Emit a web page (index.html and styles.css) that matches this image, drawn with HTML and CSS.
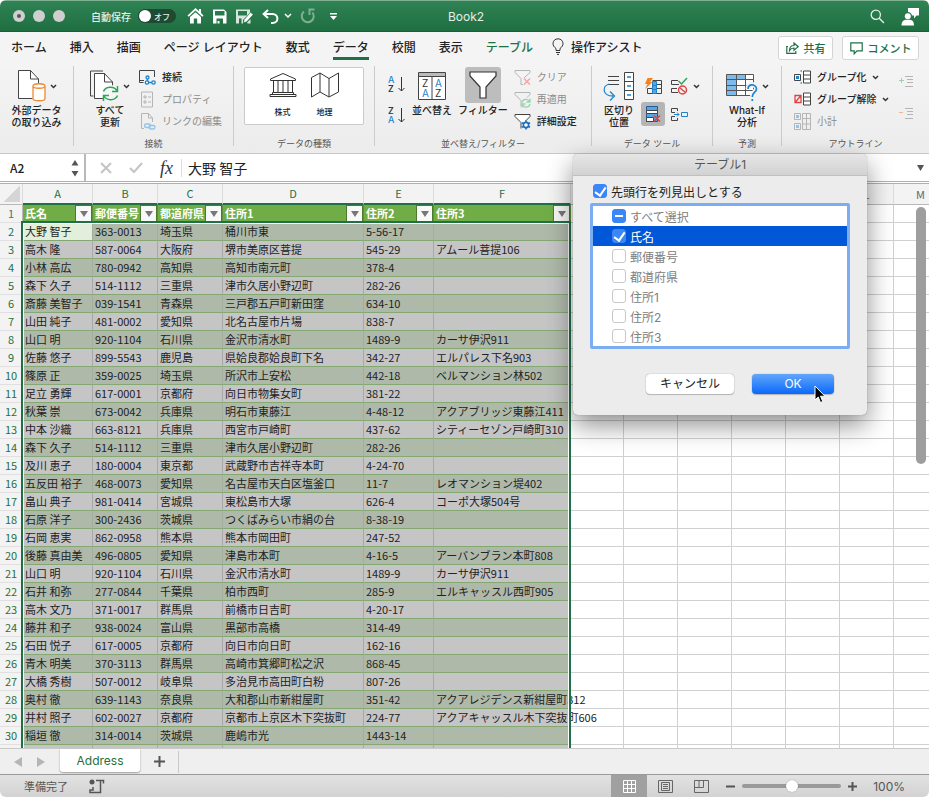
FILE: index.html
```html
<!DOCTYPE html>
<html lang="ja">
<head>
    <meta charset="UTF-8">
    <meta name="viewport" content="width=device-width, initial-scale=1.0">
    <title>Book2</title>

    <link rel="stylesheet" href="styles.css">

</head>
<body>

<div class="window">

    <!-- title bar -->
    <header class="titlebar">
        <div class="title-left">
            <div class="lights">
                <span class="light edited"></span>
                <span class="light"></span>
                <span class="light"></span>
            </div>
            <label class="autosave">自動保存
                <span class="toggle"><input type="checkbox" class="toggle-knob"><span class="toggle-text">オフ</span></span>
            </label>
            <div class="quick">
                <button aria-label="ホーム"><svg width="17" height="16" viewBox="0 0 17 16" fill="#fff"><path d="M8.500 0 0.500 7.500 1.700 8.800 8.500 2.600 15.300 8.800 16.500 7.500 14 5.100V1h-2v2.300z"/><path d="M3 9 8.500 4.200 14 9v6.500H10.200V10.500H6.800v5H3z"/></svg></button>
                <button aria-label="保存"><svg width="15" height="15" viewBox="0 0 15 15"><path fill="#fff" fill-rule="evenodd" d="M1 .5h11L14.500 3v11.500H1zM3 2v4.500h9.500V2zM4.500 9.500v5h6.500v-5z"/><path fill="#fff" d="M5.500 12h2v2.500h-2z"/></svg></button>
                <button aria-label="名前を付けて保存"><svg width="19" height="15" viewBox="0 0 19 15"><path fill="#d5e5da" fill-rule="evenodd" d="M1 .5h14V4L8 11v3.500H1zM3 2v4.500h9V2zM4 9.500v5h2.500v-5z"/><path fill="#fff" stroke="#24723f" stroke-width=".6" d="M8.500 13.800 9.200 10.600 15.600 3.300 18.200 5.500 11.700 12.800z"/><path fill="#d5e5da" d="M12.500 13.300 15.500 10v4.500h-3z"/></svg></button>
                <button aria-label="元に戻す"><svg width="17" height="15" viewBox="0 0 17 15" fill="none" stroke="#fff" stroke-width="2"><path d="M6 1 1.600 5 6 9M2 5h8.500c6.500 0 6.500 9 0 9H9"/></svg></button>
                <button class="history" aria-label="元に戻す一覧"><svg width="8" height="6" viewBox="0 0 8 6" fill="none" stroke="#fff" stroke-width="1.500"><path d="M1 1l3 3 3-3"/></svg></button>
                <button class="redo" aria-label="やり直し"><svg width="16" height="16" viewBox="0 0 16 16" fill="none" stroke="#7fb091" stroke-width="2"><path d="M4 3.500A6 6 0 1 0 12.500 4.500M14.500 1.500H9.500V7"/></svg></button>
                <button aria-label="カスタマイズ"><svg width="9" height="9" viewBox="0 0 9 9" fill="#fff"><path d="M1 1h7v1.500H1zM1 4h7L4.500 8z"/></svg></button>
            </div>
        </div>
        <h1 class="title">Book2</h1>
        <div class="title-right">
            <button aria-label="検索"><svg width="15" height="15" viewBox="0 0 15 15" fill="none" stroke="#e6f0e9" stroke-width="1.300"><circle cx="5.800" cy="5.800" r="4.600"/><path d="M9.200 9.200 14 14"/></svg></button>
            <button aria-label="アカウント"><svg width="18" height="19" viewBox="0 0 18 19" fill="#fff"><path d="M7 1h11v7.500h-2.500L13 11.500V8.500H11A4.500 4.500 0 0 0 7 5z"/><circle cx="6.800" cy="9.300" r="3"/><path d="M.5 18.500c0-3.800 2-5.500 4-5.700h4.500c2.500.2 4 2 4 5.700z"/></svg></button>
        </div>
    </header>

    <!-- ribbon tabs -->
    <nav class="tabs">
        <a href="#" class="tab">ホーム</a>
        <a href="#" class="tab">挿入</a>
        <a href="#" class="tab">描画</a>
        <a href="#" class="tab">ページ レイアウト</a>
        <a href="#" class="tab">数式</a>
        <a href="#" class="tab active">データ</a>
        <a href="#" class="tab">校閲</a>
        <a href="#" class="tab">表示</a>
        <a href="#" class="tab context">テーブル</a>
        <a href="#" class="tab assist"><svg width="12" height="17" viewBox="0 0 12 17" fill="none" stroke="#333"><path d="M4 12.500v-2C2 9 1 7.500 1 5.500 1 2.800 3.200.8 6 .8s5 2 5 4.700c0 2-1 3.500-3 5v2zM4 14.500h4M5 16.400h2"/></svg>操作アシスト</a>
        <div class="share">
            <button class="share-button"><svg width="13" height="12" viewBox="0 0 13 12" fill="none" stroke="#1e7145" stroke-width="1.200"><path d="M2 4.500H.8v6.800h9V9"/><path d="M3.500 8.500C3.500 5 5.500 3.500 8 3.500V1L12.200 4.700 8 8.200V6C6 6 4.500 6.800 3.500 8.500z"/></svg>共有</button>
            <button class="share-button comment"><svg width="13" height="13" viewBox="0 0 13 13" fill="none" stroke="#1e7145" stroke-width="1.200"><path d="M.8.8h11.400v8H7L4.200 11.800v-3H.8z"/></svg>コメント</button>
        </div>
    </nav>

    <!-- ribbon -->
    <div class="ribbon">

        <section class="group external">
            <div class="group-body">
                <button class="big">
                    <span class="big-icon">
                        <svg width="29" height="32" viewBox="0 0 29 32" fill="none" stroke="#444"><path fill="#fff" d="M15.500 28.500H1.500V.5H13.500L21.500 9v6"/><path d="M13.500.5V9h8"/><path fill="#fff" stroke="#f08a30" stroke-width="1.300" d="M16 16v12.500c0 3 12 3 12 0V16c0-3-12-3-12 0zc0 3 12 3 12 0"/></svg>
                        <svg class="chevron" viewBox="0 0 7 5"><path d="M1 1l2.500 2.500L6 1"/></svg>
                    </span>
                    外部データ<br>の取り込み
                </button>
            </div>
        </section>

        <section class="group connect">
            <div class="group-body">
                <button class="big">
                    <span class="big-icon">
                        <svg width="29" height="32" viewBox="0 0 29 32" fill="none" stroke="#444"><path d="M3.500 26H.5V1H13"/><path fill="#fff" d="M13 28.500H4.500V3.500H14.500L22.500 12v4"/><path d="M14.500 3.500V12h8"/><circle cx="20.500" cy="23.500" r="8.500" fill="#f6f6f6" stroke="none"/><g stroke="#2ba65a" stroke-width="1.500"><path d="M13.500 21.500C15.500 16.500 24 15.500 27 21M27.500 16v5.500H22M27.500 25.500C25.500 30.500 17 31.500 14 26M13.500 31v-5.500H19"/></g></svg>
                        <svg class="chevron" viewBox="0 0 7 5"><path d="M1 1l2.500 2.500L6 1"/></svg>
                    </span>
                    すべて<br>更新
                </button>
                <div class="stack">
                    <button class="small"><svg width="17" height="16" viewBox="0 0 17 16" fill="none" stroke="#444"><path d="M4.500 13.500H.5V1.500H15.500V8M.5 11.500H5"/><g stroke="#1f83cc" stroke-width="1.300"><circle cx="8.500" cy="8.500" r="1.500"/><circle cx="8" cy="13.500" r="1.700"/><circle cx="14.500" cy="13.500" r="1.700"/><path d="M8.500 10v2M9.700 13.500h3"/></g></svg>接続</button>
                    <button class="small" disabled><svg width="17" height="17" viewBox="0 0 17 17" fill="none" stroke="#b5b5b5"><path d="M2.500 1h11v15h-11z"/><path d="M5 5h2v2H5zM5 10h2v2H5zM9 6h3M9 11h3"/></svg>プロパティ</button>
                    <button class="small" disabled><svg width="17" height="17" viewBox="0 0 17 17" fill="none" stroke="#b5b5b5"><path d="M5 15.500H2.500V.5h7l4 4.500v4M9.500.5V5h4"/><g stroke="#93c3e8" stroke-width="1.300"><rect x="5.500" y="11" width="6" height="3.500" rx="1.700"/><rect x="10" y="12.500" width="6" height="3.500" rx="1.700"/></g></svg>リンクの編集</button>
                </div>
            </div>
            <h2 class="group-label">接続</h2>
        </section>

        <section class="group types">
            <div class="group-body">
                <div class="gallery">
                    <button class="type"><svg width="28" height="26" viewBox="0 0 28 26" fill="none" stroke="#333"><path d="M1.500 8.500v-1.500L14 1.500 26.500 7v1.500zM4.500 8.500v12M9 8.500v12M14 8.500v12M19 8.500v12M23.500 8.500v12M3.500 20.500h21v2h-21zM1 22.500h26v2H1z"/></svg>株式</button>
                    <button class="type"><svg width="30" height="26" viewBox="0 0 30 26" fill="none" stroke="#333"><path d="M1.500 5.500 10 1l9 5.500L28.500 1v19L19 25l-9-5-8.500 5zM10 1v19M19 6.500V25"/></svg>地理</button>
                </div>
            </div>
            <h2 class="group-label">データの種類</h2>
        </section>

        <section class="group sort">
            <div class="group-body">
                <div class="sorts">
                    <button aria-label="昇順"><svg width="18" height="18" viewBox="0 0 18 18"><text x="0" y="8" class="glyph blue">A</text><text x="0" y="17" class="glyph">Z</text><path d="M13.500 2v14M10.500 13l3 3 3-3" fill="none" stroke="#333"/></svg></button>
                    <button aria-label="降順"><svg width="18" height="18" viewBox="0 0 18 18"><text x="0" y="8" class="glyph">Z</text><text x="0" y="17" class="glyph blue">A</text><path d="M13.500 2v14M10.500 13l3 3 3-3" fill="none" stroke="#333"/></svg></button>
                </div>
                <button class="big">
                    <span class="big-icon">
                        <svg width="28" height="30" viewBox="0 0 28 30"><path d="M.5 1.500h27v27H.5z" fill="#fff" stroke="#444"/><path d="M1 2h26v3.500H1z" fill="#bbb"/><path d="M.5 5.500h27M14 5.500v23" stroke="#444"/><text x="4" y="16" class="glyph large">Z</text><text x="4" y="26" class="glyph large blue">A</text><text x="17" y="16" class="glyph large blue">A</text><text x="17" y="26" class="glyph large">Z</text></svg>
                    </span>
                    並べ替え
                </button>
                <button class="big pressed">
                    <span class="big-icon">
                        <svg width="28" height="30" viewBox="0 0 28 30" fill="#fff" stroke="#333" stroke-width="1.200"><path d="M1 2h26v4L17 17v11h-6V17L1 6z"/></svg>
                    </span>
                    フィルター
                </button>
                <div class="stack">
                    <button class="small" disabled><svg width="17" height="17" viewBox="0 0 17 17" fill="none" stroke="#b5b5b5"><path d="M9 15.500H7v-6L1 3.500v-2h15v2L10 9"/><path stroke="#f3a6a6" stroke-width="1.500" d="M10 9.500l6 6M16 9.500l-6 6"/></svg>クリア</button>
                    <button class="small" disabled><svg width="17" height="17" viewBox="0 0 17 17" fill="none" stroke="#b5b5b5"><path d="M7 15.500V9.500L1 3.500v-2h15v2L13 6.500"/><path stroke="#9ad3ae" stroke-width="1.300" d="M8 11.500c1-4 6-4 7.500-1M16 7.500v3.500h-3.500M16 13c-1 4-6 4-7.500 1M8 16.500V13h3.500"/></svg>再適用</button>
                    <button class="small"><svg width="17" height="17" viewBox="0 0 17 17" fill="none" stroke="#444"><path fill="#fff" d="M7 15.500V9.500L1 3.500v-2h15v2L11.500 8"/><circle cx="12" cy="12" r="2.600" fill="#fff" stroke="#1f6fb8" stroke-width="1.600"/><path stroke="#1f6fb8" stroke-width="1.600" d="M12 7.500v2M12 14.500v2M8 9.700l1.800 1M14.200 13.300l1.800 1M8 14.300l1.800-1M14.200 10.700l1.800-1"/></svg>詳細設定</button>
                </div>
            </div>
            <h2 class="group-label">並べ替え/フィルター</h2>
        </section>

        <section class="group tools">
            <div class="group-body">
                <button class="big">
                    <span class="big-icon">
                        <svg width="32" height="31" viewBox="0 0 32 31" fill="none" stroke="#444"><path d="M5 5.500h11M5 9.500h11M5 13.500h11"/><path fill="#fff" d="M21.500 1.500h9v27h-9zM21.500 10.500h9M21.500 19.500h9"/><path stroke="#1f83cc" stroke-width="1.300" d="M24 6h4M24 15h4M24 24h4M6 13C-1 15-1 25 10 25M7 20.500l4.500 4.500L7 29.500"/></svg>
                    </span>
                    区切り<br>位置
                </button>
                <div class="tool-grid">
                    <button aria-label="フラッシュ フィル"><svg width="18" height="18" viewBox="0 0 18 18" fill="none" stroke="#444"><path d="M3.500 11.500h14v5h-14zM8.500 3.500h9v8M8.500 7.500h9"/><path fill="#5aa5e0" stroke="#1f83cc" d="M8.500 4.500h4v12h-4zM8.500 8.500h4M8.500 12.500h4"/><path fill="#f58220" stroke="none" d="M3.500 1H9L6 5h2.500L1 12 3.500 7H1z"/></svg></button>
                    <button aria-label="入力規則"><svg width="18" height="18" viewBox="0 0 18 18" fill="none" stroke="#444"><path d="M8 3.500H1.500v4H9M7 11.500H1.500v4H8"/><path stroke="#2ba65a" stroke-width="1.500" d="M8.500 4l3 3L17 1"/><circle cx="12.500" cy="13" r="4" stroke="#e04545" stroke-width="1.500"/><path stroke="#e04545" stroke-width="1.500" d="M9.500 10.500l6 5"/></svg></button>
                    <svg class="chevron" viewBox="0 0 7 5"><path d="M1 1l2.500 2.500L6 1"/></svg>
                    <button class="tool-pressed" aria-label="重複の削除"><svg width="18" height="18" viewBox="0 0 18 18"><path fill="#5aa5e0" stroke="#1c5f9c" d="M2.500 1.500h11v15h-11z"/><path fill="#fff" stroke="#444" d="M2.500 5.500h11v3h-11zM2.500 12.500h7v4h-7z"/><path fill="none" stroke="#e04545" stroke-width="1.500" d="M10 10.500l6 6M16 10.500l-6 6"/></svg></button>
                    <button aria-label="統合"><svg width="18" height="18" viewBox="0 0 18 18" fill="none" stroke="#444"><path d="M7.500 6V3.500h-6v4H5M5 11.500H1.500v4h6V13"/><path stroke="#1f83cc" d="M4 9.500h5M7 7.500l2 2-2 2M11.500 7.500h6v4h-6z"/></svg></button>
                </div>
            </div>
            <h2 class="group-label">データ ツール</h2>
        </section>

        <section class="group whatif">
            <div class="group-body">
                <button class="big">
                    <span class="big-icon">
                        <svg width="32" height="32" viewBox="0 0 32 32"><path fill="#fff" d="M1 4h27v21H1z"/><path fill="#7dbbea" d="M1 4h9v21H1zM10 4h9v5h-9z"/><path fill="none" stroke="#555" d="M.5 4.500h27v21H.5zM.5 9.500h27M.5 15.500h27M.5 20.500h27M10.500 4.500v21M19.500 4.500v21"/><path fill="none" stroke="#f2f2f2" stroke-width="5" d="M22 19c0-7 9-5 8.500 0-.5 3-4 3-4 7v4"/><path fill="none" stroke="#1f83cc" stroke-width="1.700" d="M22 19c0-6 8.500-5 8.500 0 0 3.500-4.200 3-4.200 8M26.300 29v2"/></svg>
                        <svg class="chevron" viewBox="0 0 7 5"><path d="M1 1l2.500 2.500L6 1"/></svg>
                    </span>
                    What-If<br>分析
                </button>
            </div>
            <h2 class="group-label">予測</h2>
        </section>

        <section class="group outline">
            <div class="group-body">
                <div class="stack">
                    <button class="small"><svg width="17" height="14" viewBox="0 0 17 14" fill="none" stroke="#444"><path d="M8 1H6.500M8 13H6.500M.5 4.500h6v6h-6z"/><path fill="#fff" d="M9.500 1h7v12h-7zM9.500 5h7M9.500 9h7"/><path fill="#1f83cc" stroke="none" d="M2 6h3v3H2z"/></svg>グループ化<svg class="chevron" viewBox="0 0 7 5"><path d="M1 1l2.500 2.500L6 1"/></svg></button>
                    <button class="small"><svg width="17" height="14" viewBox="0 0 17 14" fill="none" stroke="#444"><path fill="#fff" d="M9.500 1h7v12h-7zM9.500 5h7M9.500 9h7"/><path stroke="#e04545" stroke-width="1.300" d="M1 3.500h6v7H1zM1 10.500l6-7"/></svg>グループ解除<svg class="chevron" viewBox="0 0 7 5"><path d="M1 1l2.500 2.500L6 1"/></svg></button>
                    <button class="small" disabled><svg width="17" height="17" viewBox="0 0 17 17" fill="none" stroke="#b5b5b5"><path d="M.5.5h6v6h-6zM.5 10.500h6v6h-6zM8.500.5h8v16h-8zM8.500 5.500h8M8.500 11h8M12.500.5v16"/><path fill="#93c3e8" stroke="none" d="M2 2h3v3H2zM2 12h3v3H2z"/></svg>小計</button>
                </div>
                <div class="details">
                    <button aria-label="詳細データの表示"><svg width="14" height="13" viewBox="0 0 14 13" fill="none" stroke="#b5b5b5"><path d="M6 1.500h8M8 4.500h6M8 7.500h6M6 11.500h8"/><path stroke="#9ad3ae" d="M0 5.500h5M2.500 3v5"/></svg></button>
                    <button aria-label="詳細を表示しない"><svg width="14" height="13" viewBox="0 0 14 13" fill="none" stroke="#b5b5b5"><path d="M6 1.500h8M8 4.500h6M8 7.500h6M6 11.500h8"/><path stroke="#f0b890" d="M0 5.500h4"/></svg></button>
                </div>
            </div>
            <h2 class="group-label">アウトライン</h2>
        </section>

    </div>

    <!-- formula bar -->
    <div class="formula-bar">
        <div class="name-box">
            <input type="text" value="A2" aria-label="名前ボックス">
            <svg width="8" height="18" viewBox="0 0 8 18" fill="#555"><path d="M4 1l3.500 5.500h-7zM4 17.500.5 12h7z"/></svg>
        </div>
        <div class="formula-buttons">
            <button aria-label="キャンセル"><svg width="12" height="12" viewBox="0 0 12 12" fill="none" stroke="#c4c4c4" stroke-width="2"><path d="M1 1l10 10M11 1 1 11"/></svg></button>
            <button aria-label="入力"><svg width="14" height="12" viewBox="0 0 14 12" fill="none" stroke="#c4c4c4" stroke-width="2"><path d="M1 6l4 4 8-9"/></svg></button>
            <button class="fx">fx</button>
        </div>
        <input type="text" class="formula" value="大野 智子" aria-label="数式">
        <svg class="expand" width="7" height="6" viewBox="0 0 7 6" fill="#555"><path d="M0 0h7L3.500 6z"/></svg>
    </div>

    <!-- sheet, rows are filled by script.js -->
    <main class="sheet" id="sheet">
        <table class="grid">
            <colgroup id="columns"></colgroup>
            <thead id="letters"></thead>
            <tbody id="rows"></tbody>
        </table>
        <div class="selection"></div>
        <div class="scroll-thumb"></div>
    </main>

    <!-- sheet tabs -->
    <div class="sheet-tabs">
        <button class="arrow" aria-label="前のシート"><svg width="8" height="10" viewBox="0 0 8 10" fill="#b5b5b5"><path d="M8 0v10L0 5z"/></svg></button>
        <button class="arrow" aria-label="次のシート"><svg width="8" height="10" viewBox="0 0 8 10" fill="#b5b5b5"><path d="M0 0v10l8-5z"/></svg></button>
        <button class="sheet-tab">Address</button>
        <button class="add-sheet" aria-label="シートの追加"><svg width="11" height="11" viewBox="0 0 11 11" stroke="#555" stroke-width="2"><path d="M0 5.500h11M5.500 0v11"/></svg></button>
    </div>

    <!-- status bar -->
    <footer class="status">
        <span class="ready">準備完了</span>
        <svg class="macro" width="16" height="15" viewBox="0 0 16 15" fill="none" stroke="#555" stroke-width="1.500"><circle cx="3" cy="3" r="2.500" fill="#555" stroke="none"/><path d="M4 8v3H1v2.500h10.500V1.500M7 1.500h7.500v3"/></svg>
        <div class="status-right">
            <button class="view active" aria-label="標準"><svg width="13" height="13" viewBox="0 0 13 13" fill="none" stroke="#fff"><path d="M.5.5h12v12H.5zM.5 4.500h12M.5 8.500h12M4.500.5v12M8.500.5v12"/></svg></button>
            <button class="view" aria-label="ページ レイアウト"><svg width="15" height="13" viewBox="0 0 15 13" fill="none" stroke="#666"><path d="M.5.500h14v12H.5zM3.500 2.500h8v8h-8zM5 4.500h5M5 6.500h5M5 8.500h5"/></svg></button>
            <button class="view" aria-label="改ページ プレビュー"><svg width="15" height="13" viewBox="0 0 15 13" fill="none" stroke="#666"><path d="M.5.500h14v12H.5zM.5 7.500h9v-7M5 .5v7"/></svg></button>
            <button class="zoom-button" aria-label="縮小"><svg width="9" height="9" viewBox="0 0 9 9" stroke="#555" stroke-width="2"><path d="M0 4.500h9"/></svg></button>
            <input type="range" class="zoom" min="0" max="100" value="50" aria-label="ズーム">
            <button class="zoom-button" aria-label="拡大"><svg width="9" height="9" viewBox="0 0 9 9" stroke="#555" stroke-width="2"><path d="M0 4.500h9M4.500 0v9"/></svg></button>
            <span class="percent">100%</span>
        </div>
    </footer>

    <!-- remove duplicates dialog -->
    <div class="dialog" role="dialog" aria-labelledby="dialog-title">
        <h2 class="dialog-title" id="dialog-title">テーブル1</h2>
        <div class="dialog-body">
            <label class="check"><input type="checkbox" checked>先頭行を列見出しとする</label>
            <div class="check-list">
                <label class="check"><input type="checkbox" class="mixed">すべて選択</label>
                <label class="check selected"><input type="checkbox" checked>氏名</label>
                <label class="check"><input type="checkbox">郵便番号</label>
                <label class="check"><input type="checkbox">都道府県</label>
                <label class="check"><input type="checkbox">住所1</label>
                <label class="check"><input type="checkbox">住所2</label>
                <label class="check"><input type="checkbox">住所3</label>
            </div>
            <div class="dialog-buttons">
                <button class="cancel">キャンセル</button>
                <button class="ok">OK</button>
            </div>
        </div>
        <svg class="pointer" width="13" height="19" viewBox="0 0 13 19"><path d="M1 1v14l3.200-3 2.300 5.500 2.300-1L6.500 11.200H11z" fill="#000" stroke="#fff"/></svg>
    </div>

</div>

<script src="script.js"></script>

</body>
</html>
```

FILE: styles.css
```css
*{
    box-sizing: border-box;
}

body{
    margin: 0;
    background-color: #fff;
    font-family: Inter, "Noto Sans CJK JP", sans-serif;
    font-size: 12px;
    color: #222;
}

button{
    margin: 0;
    padding: 0;
    border: 0;
    background: none;
    font: inherit;
    color: inherit;
}

svg{
    display: block;
    flex: none;
}

h1, h2{
    margin: 0;
    font-weight: normal;
}

.window{
    position: relative;
    display: flex;
    flex-direction: column;
    height: 100vh;
    border-radius: 6px;
    overflow: hidden;
}

/* title bar */

.titlebar{
    flex: none;
    display: grid;
    grid-template-columns: 1fr auto 1fr;
    align-items: center;
    height: 32px;
    padding: 0 10px 0 13px;
    border-top: 1px solid #7fb091;
    border-bottom: 1px solid #1b5e38;
    background: linear-gradient(#2f8354, #1f6e41);
    color: #fff;
}

.title-left, .title-right, .lights, .quick, .autosave, .toggle{
    display: flex;
    align-items: center;
}

.lights{
    gap: 8px;
}

.light{
    display: flex;
    width: 12px;
    height: 12px;
    border-radius: 50%;
    background-color: #cfcfcf;
}

.edited::after{
    content: "";
    width: 4px;
    height: 4px;
    margin: auto;
    border-radius: 50%;
    background-color: #555;
}

.autosave{
    gap: 7px;
    margin-left: 26px;
    font-size: 10px;
    font-weight: 500;
    color: #e3efe7;
}

.toggle{
    width: 38px;
    height: 14px;
    gap: 3px;
    border-radius: 7px;
    background-color: #1d4a31;
    font-size: 8px;
}

.toggle-knob{
    appearance: none;
    width: 12px;
    height: 12px;
    margin: 0 0 0 1px;
    border-radius: 50%;
    background-color: #fff;
}

.quick{
    gap: 8px;
    margin-left: 11px;
}

.history{
    margin-left: -3px;
}

.redo{
    margin-right: 5px;
}

.title{
    font-size: 12px;
    color: #e3efe7;
}

.title-right{
    justify-content: flex-end;
    gap: 16px;
}

/* ribbon tabs */

.tabs{
    flex: none;
    display: flex;
    gap: 23px;
    height: 32px;
    padding: 0 10px 0 11px;
    background-color: #f4f4f4;
}

.tab{
    display: flex;
    align-items: center;
    height: 28px;
    padding-top: 4px;
    border-bottom: 3px solid transparent;
    font-weight: 500;
    white-space: nowrap;
    text-decoration: none;
    color: #222;
}

.active.tab{
    border-color: #1e7145;
}

.context{
    color: #1e7145;
}

.assist{
    gap: 7px;
    margin-left: -4px;
}

.share{
    display: flex;
    align-items: center;
    gap: 9px;
    margin-left: auto;
}

.share-button{
    display: flex;
    align-items: center;
    justify-content: center;
    gap: 5px;
    width: 55px;
    height: 24px;
    border: 1px solid #d5d5d5;
    border-radius: 3px;
    background-color: #fff;
    font-size: 11px;
    font-weight: 500;
    color: #1e7145;
}

.comment{
    width: 77px;
}

/* ribbon */

.ribbon{
    flex: none;
    display: flex;
    height: 90px;
    padding-top: 2px;
    border-bottom: 1px solid #c9c9c9;
    background: linear-gradient(#f4f4f4, #ececec);
    font-size: 10px;
    font-weight: 500;
    line-height: 12px;
    white-space: nowrap;
}

.group{
    display: flex;
    flex-direction: column;
    height: 80px;
    border-right: 1px solid #cbcbcb;
}

.group-body{
    flex: none;
    display: flex;
    height: 71px;
}

.group-label{
    flex: none;
    font-size: 9px;
    font-weight: normal;
    line-height: 14px;
    text-align: center;
    color: #555;
}

.external{
    width: 74px;
}

.connect{
    width: 160px;
}

.types{
    width: 141px;
}

.sort{
    width: 217px;
}

.tools{
    width: 121px;
}

.whatif{
    width: 69px;
}

.outline{
    flex: 1;
    border-right: 0;
}

.external .group-body, .whatif .group-body, .types .group-body{
    justify-content: center;
}

.connect .group-body{
    gap: 9px;
    padding-left: 16px;
}

.sort .group-body{
    gap: 6px;
    padding-left: 13px;
}

.tools .group-body{
    gap: 6px;
    padding-left: 11px;
}

.outline .group-body{
    gap: 10px;
    padding-left: 12px;
}

.big{
    display: block;
    align-self: flex-start;
    padding-top: 4px;
    line-height: 12px;
}

.big-icon{
    display: flex;
    align-items: center;
    justify-content: center;
    gap: 4px;
    height: 34px;
    padding-bottom: 2px;
}

.pressed{
    padding-top: 1px;
}

.pressed .big-icon{
    width: 36px;
    height: 36px;
    margin: 0 auto 1px;
    padding: 0;
    border-radius: 3px;
    background-color: #bdbdbd;
}

.chevron{
    width: 7px;
    height: 5px;
    fill: none;
    stroke: #333;
    stroke-width: 1.5;
}

.small{
    display: flex;
    align-items: center;
    gap: 6px;
    height: 22px;
}

.small:disabled{
    color: #8c8c8c;
    font-weight: normal;
}

.gallery{
    display: flex;
    gap: 13px;
    justify-content: center;
    width: 120px;
    height: 58px;
    margin-top: 1px;
    border: 1px solid #cbcbcb;
    border-radius: 2px;
    background-color: #fff;
}

.type{
    display: flex;
    flex-direction: column;
    align-items: center;
    gap: 8px;
    padding-top: 4px;
    font-size: 8px;
}

.sorts{
    display: flex;
    flex-direction: column;
    gap: 13px;
    padding-top: 9px;
}

.glyph{
    font-family: Inter, sans-serif;
    font-size: 9px;
    font-weight: 500;
    fill: #333;
}

.large{
    font-size: 10px;
    font-weight: normal;
}

.blue{
    fill: #1f83cc;
}

.tool-grid{
    display: grid;
    grid-template: 24px 24px / 24px 18px 7px;
    gap: 4px 5px;
    align-content: start;
    align-items: center;
    justify-items: center;
    padding-top: 8px;
}

.tool-pressed{
    padding: 3px;
    border-radius: 3px;
    background-color: #b5b5b5;
}

.details{
    display: flex;
    flex-direction: column;
    gap: 19px;
    padding-top: 9px;
}

/* formula bar */

.formula-bar{
    flex: none;
    display: flex;
    align-items: center;
    height: 30px;
    padding-right: 5px;
    border-bottom: 3px double #b0b0b0;
    background-color: #fff;
}

.formula-bar input{
    min-width: 0;
    margin: 0;
    padding: 0;
    border: 0;
    outline: 0;
    background: none;
    font: 14px "Noto Sans CJK JP", sans-serif;
    color: #222;
}

.name-box{
    display: flex;
    align-items: center;
    width: 86px;
    height: 27px;
    padding: 0 5px 0 10px;
    border-right: 2px solid #b9b9b9;
}

.formula-bar .name-box input{
    flex: 1;
    font-size: 12px;
    font-weight: 500;
}

.formula-buttons{
    display: flex;
    align-items: center;
    gap: 17px;
    margin-right: 6px;
    padding: 0 8px 0 14px;
    border-right: 1px solid #ddd;
}

.fx{
    font: italic 18px/18px "Liberation Serif", serif;
    color: #333;
}

.formula-bar .formula{
    flex: 1;
}

/* sheet */

.sheet{
    position: relative;
    flex: 1;
    min-height: 0;
    overflow: hidden;
    background-color: #fff;
}

.grid{
    table-layout: fixed;
    width: 100%;
    border-spacing: 0;
    font: 11px "Noto Sans CJK JP", sans-serif;
    line-height: 17px;
}

.grid th, .grid td{
    height: 18px;
    padding: 0 0 0 2px;
    border-right: 1px solid #d0d0d0;
    border-bottom: 1px solid #d0d0d0;
    white-space: nowrap;
}

.grid .letter{
    height: 21px;
    padding: 0;
    border-right-color: #dcdcdc;
    border-bottom-color: #b9b9b9;
    background-color: #f3f3f3;
    font-weight: normal;
    line-height: 19px;
    color: #666;
}

.grid .picked{
    border-bottom: 2px solid #1e7145;
    color: #1e7145;
}

.corner{
    width: 16px;
    height: 16px;
    margin-left: 4px;
    background: linear-gradient(135deg, transparent 50%, #d5d5d5 50%);
}

.grid .number{
    padding: 0;
    border-color: #e0e0e0;
    border-right-color: #b9b9b9;
    background-color: #f3f3f3;
    font-weight: normal;
    text-align: center;
    color: #666;
}

.grid .in-selection{
    color: #1e7145;
}

.grid .heading{
    border-right-color: #5d9139;
    border-bottom-color: #1e7145;
    background-color: #70ad47;
    text-align: left;
    color: #fff;
}

.heading-box{
    display: flex;
    align-items: center;
    justify-content: space-between;
    height: 17px;
    padding-right: 1px;
}

.filter{
    flex: none;
    display: flex;
    align-items: center;
    justify-content: center;
    width: 15px;
    height: 15px;
    background-color: #f8f8f8;
    box-shadow: 0 0 0 1px #4b7a2d;
}

.grid .green{
    border-right-color: #a3ae9b;
    border-bottom-color: #84a872;
    background-color: #afb9aa;
}

.grid .gray{
    border-right-color: #a8a8a8;
    border-bottom-color: #84a872;
    background-color: #c5c5c5;
}

.grid .current{
    background-color: #e2efda;
}

.selection{
    position: absolute;
    top: 37px;
    bottom: -4px;
    left: 21px;
    width: 550px;
    border: 2px solid #1e7145;
    box-shadow: inset 0 0 0 1px #fff;
}

.scroll-thumb{
    position: absolute;
    top: 23px;
    right: 3px;
    width: 10px;
    height: 257px;
    border-radius: 5px;
    background-color: #9e9e9e;
}

/* sheet tabs */

.sheet-tabs{
    flex: none;
    display: flex;
    align-items: center;
    height: 26px;
    padding-left: 14px;
    border-top: 1px solid #c9c9c9;
    background-color: #efefef;
}

.arrow{
    margin-right: 15px;
}

.sheet-tab{
    align-self: flex-start;
    width: 80px;
    height: 23px;
    border-radius: 0 0 3px 3px;
    background-color: #fff;
    box-shadow: 0 1px 2px #999;
    font-size: 12px;
    color: #1e7145;
}

.add-sheet{
    display: flex;
    align-items: center;
    height: 22px;
    padding: 0 13px 0 14px;
    border-right: 1px solid #c9c9c9;
}

/* status bar */

.status{
    flex: none;
    display: flex;
    align-items: center;
    height: 23px;
    padding: 0 24px;
    border-top: 1px solid #9a9a9a;
    background: linear-gradient(#e2e2e2, #d2d2d2);
    color: #555;
}

.ready{
    font-size: 11px;
}

.macro{
    margin-left: 21px;
}

.status-right{
    display: flex;
    align-items: center;
    height: 22px;
    margin-left: auto;
}

.view{
    display: flex;
    align-items: center;
    justify-content: center;
    width: 36px;
    height: 22px;
}

.view.active{
    background-color: #a0a0a0;
}

.zoom-button{
    margin: 0 7px;
}

.zoom{
    appearance: none;
    width: 99px;
    height: 4px;
    margin: 0;
    border-radius: 2px;
    background-color: #999;
}

.zoom::-webkit-slider-thumb{
    appearance: none;
    width: 12px;
    height: 12px;
    border-radius: 50%;
    background-color: #fff;
    box-shadow: 0 0 1px #777;
}

.percent{
    margin-left: 9px;
}

/* dialog */

.dialog{
    position: absolute;
    top: 154px;
    right: 62px;
    width: 294px;
    border-radius: 5px;
    background-color: #ececec;
    box-shadow: 0 0 1px #777, 0 10px 26px rgba(0, 0, 0, 0.45);
}

.dialog-title{
    height: 22px;
    border-bottom: 1px solid #c0c0c0;
    border-radius: 5px 5px 0 0;
    background: linear-gradient(#e6e6e6, #d2d2d2);
    font-size: 12px;
    line-height: 21px;
    text-align: center;
    color: #555;
}

.dialog-body{
    padding: 5px 17px 21px;
}

.check{
    display: flex;
    align-items: center;
    gap: 4px;
    height: 20px;
    padding-left: 3px;
}

.check input{
    appearance: none;
    display: flex;
    justify-content: center;
    width: 14px;
    height: 14px;
    margin: 0;
    border: 1px solid #c8c8c8;
    border-radius: 3px;
    background-color: #fff;
}

.check input:checked, .check .mixed{
    border-color: #3b87f7;
    background-color: #3b87f7;
}

.check input:checked::before{
    content: "";
    width: 5px;
    height: 9px;
    border: solid #fff;
    border-width: 0 2px 2px 0;
    transform: rotate(35deg);
}

.check .mixed::before{
    content: "";
    width: 8px;
    height: 2px;
    margin-top: 5px;
    background-color: #fff;
}

.check-list{
    margin-top: 2px;
    border: 3px solid #7badf2;
    border-radius: 2px;
    background-color: #fff;
}

.check-list .check{
    padding-left: 19px;
    color: #808080;
}

.check-list .selected{
    background-color: #0058d8;
    color: #fff;
}

.dialog-buttons{
    display: flex;
    justify-content: flex-end;
    gap: 18px;
    margin-top: 25px;
    padding-right: 16px;
}

.cancel, .ok{
    width: 88px;
    height: 20px;
    border-radius: 4px;
    background-color: #fff;
    box-shadow: 0 0 1px #777, 0 1px 1px #bbb;
    line-height: 20px;
}

.ok{
    width: 82px;
    background: linear-gradient(#62a6fa, #0a69fb);
    color: #fff;
}

.pointer{
    position: absolute;
    right: 40px;
    bottom: 11px;
}
```

FILE: script.js
```js
// widths of the first columns, the others share one width
let widths = [70, 65, 65, 141, 70, 137, 53];
let defaultWidth = 54;

let headings = ['氏名', '郵便番号', '都道府県', '住所1', '住所2', '住所3'];

let people = [
    ['大野 智子', '363-0013', '埼玉県', '桶川市東', '5-56-17', ''],
    ['高木 隆', '587-0064', '大阪府', '堺市美原区菩提', '545-29', 'アムール菩提106'],
    ['小林 高広', '780-0942', '高知県', '高知市南元町', '378-4', ''],
    ['森下 久子', '514-1112', '三重県', '津市久居小野辺町', '282-26', ''],
    ['斎藤 美智子', '039-1541', '青森県', '三戸郡五戸町新田窪', '634-10', ''],
    ['山田 純子', '481-0002', '愛知県', '北名古屋市片場', '838-7', ''],
    ['山口 明', '920-1104', '石川県', '金沢市清水町', '1489-9', 'カーサ伊沢911'],
    ['佐藤 悠子', '899-5543', '鹿児島', '県姶良郡姶良町下名', '342-27', 'エルパレス下名903'],
    ['篠原 正', '359-0025', '埼玉県', '所沢市上安松', '442-18', 'ベルマンション林502'],
    ['足立 勇輝', '617-0001', '京都府', '向日市物集女町', '381-22', ''],
    ['秋葉 崇', '673-0042', '兵庫県', '明石市東藤江', '4-48-12', 'アクアブリッジ東藤江411'],
    ['中本 沙織', '663-8121', '兵庫県', '西宮市戸崎町', '437-62', 'シティーセゾン戸崎町310'],
    ['森下 久子', '514-1112', '三重県', '津市久居小野辺町', '282-26', ''],
    ['及川 恵子', '180-0004', '東京都', '武蔵野市吉祥寺本町', '4-24-70', ''],
    ['五反田 裕子', '468-0073', '愛知県', '名古屋市天白区塩釜口', '11-7', 'レオマンション堤402'],
    ['畠山 典子', '981-0414', '宮城県', '東松島市大塚', '626-4', 'コーポ大塚504号'],
    ['石原 洋子', '300-2436', '茨城県', 'つくばみらい市絹の台', '8-38-19', ''],
    ['石岡 恵実', '862-0958', '熊本県', '熊本市岡田町', '247-52', ''],
    ['後藤 真由美', '496-0805', '愛知県', '津島市本町', '4-16-5', 'アーバンブラン本町808'],
    ['山口 明', '920-1104', '石川県', '金沢市清水町', '1489-9', 'カーサ伊沢911'],
    ['石井 和弥', '277-0844', '千葉県', '柏市西町', '285-9', 'エルキャッスル西町905'],
    ['高木 文乃', '371-0017', '群馬県', '前橋市日吉町', '4-20-17', ''],
    ['藤井 和子', '938-0024', '富山県', '黒部市高橋', '314-49', ''],
    ['石田 悦子', '617-0005', '京都府', '向日市向日町', '162-16', ''],
    ['青木 明美', '370-3113', '群馬県', '高崎市箕郷町松之沢', '868-45', ''],
    ['大橋 秀樹', '507-0012', '岐阜県', '多治見市高田町白粉', '807-26', ''],
    ['奥村 徹', '639-1143', '奈良県', '大和郡山市新紺屋町', '351-42', 'アクアレジデンス新紺屋町312'],
    ['井村 照子', '602-0027', '京都府', '京都市上京区木下突抜町', '224-77', 'アクアキャッスル木下突抜町606'],
    ['稲垣 徹', '314-0014', '茨城県', '鹿嶋市光', '1443-14', '']
];

let sheet = document.getElementById('sheet');
let arrow = '<svg width="8" height="6" viewBox="0 0 8 6" fill="#777"><path d="M0 0h8L4 6z"/></svg>';

// column widths and letters, as many as the window is wide
let cols = '<col style="width: 23px">';
let head = '<tr><th class="letter"><div class="corner"></div></th>';
let total = 23;
let count = 0;

while (total < sheet.clientWidth && count < 26) {
    let width = widths[count] || defaultWidth;
    cols += '<col style="width: ' + width + 'px">';
    head += '<th class="letter' + (count < 6 ? ' picked' : '') + '">' + String.fromCharCode(65 + count) + '</th>';
    total += width;
    count++;
}

document.getElementById('columns').innerHTML = cols;
document.getElementById('letters').innerHTML = head + '</tr>';

// row 1 holds the headings with their filter buttons
let body = '<tr><th class="number">1</th>';

for (let i = 0; i < count; i++) {
    if (i < 6) {
        body += '<th class="heading"><div class="heading-box">' + headings[i] +
            '<button class="filter" aria-label="フィルター">' + arrow + '</button></div></th>';
    }
    else
        body += '<td></td>';
}

body += '</tr>';

// data rows, then blank ones down to the bottom of the sheet
let fullRows = Math.floor((sheet.clientHeight - 21) / 18);

for (let row = 2; row <= fullRows + 1; row++) {

    let person = people[row - 2] || [];
    let band = row % 2 == 0 ? 'green' : 'gray';

    // the last row is only partly in view and gets no number
    body += '<tr><th class="number in-selection">' + (row <= fullRows ? row : '') + '</th>';

    for (let i = 0; i < count; i++) {
        let name = i < 6 ? band : '';
        if (row == 2 && i == 0)
            name += ' current';
        body += '<td class="' + name + '">' + (person[i] || '') + '</td>';
    }

    body += '</tr>';
}

document.getElementById('rows').innerHTML = body;
```
